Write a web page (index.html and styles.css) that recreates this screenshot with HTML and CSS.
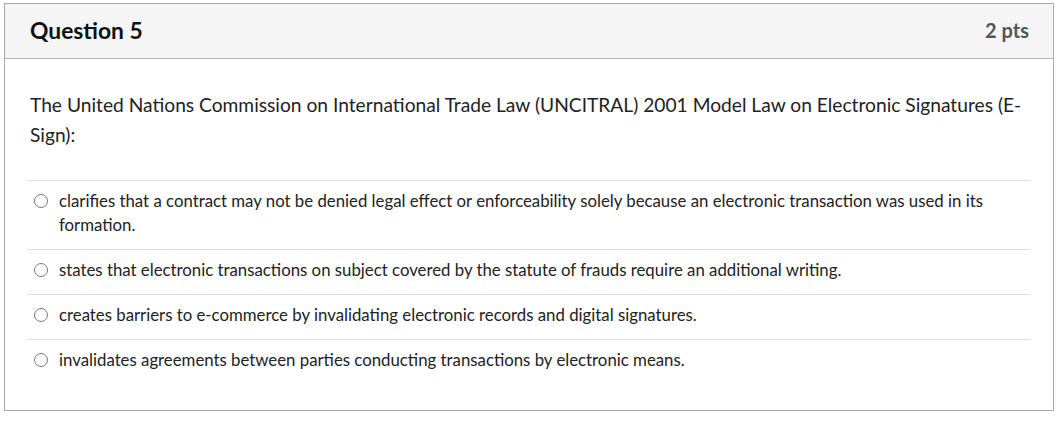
FILE: index.html
```html
<!DOCTYPE html>
<html>
<head>
<meta charset="utf-8">
<link rel="stylesheet" href="styles.css">
</head>
<body>
<div class="question">
  <div class="header">
    <h2 class="title">Question 5</h2>
    <div class="pts">2 pts</div>
  </div>
  <div class="content">
    <p class="text">The United Nations Commission on International Trade Law (UNCITRAL) 2001 Model Law on Electronic Signatures (E-Sign):</p>
    <div class="answers">
      <label class="answer"><span class="radio"></span><span class="atext">clarifies that a contract may not be denied legal effect or enforceability solely because an electronic transaction was used in its formation.</span></label>
      <label class="answer"><span class="radio"></span><span class="atext">states that electronic transactions on subject covered by the statute of frauds require an additional writing.</span></label>
      <label class="answer"><span class="radio"></span><span class="atext">creates barriers to e-commerce by invalidating electronic records and digital signatures.</span></label>
      <label class="answer"><span class="radio"></span><span class="atext">invalidates agreements between parties conducting transactions by electronic means.</span></label>
    </div>
  </div>
</div>
</body>
</html>
```
FILE: styles.css
```css
* { box-sizing: border-box; }
html, body { margin: 0; background: #fff; }
body {
  padding: 3px 5px 0 4px;
  font-family: Lato, "Open Sans", sans-serif;
  color: #222;
}
.question {
  border: 1px solid #a8a8a8;
  height: 408px;
  background: #fff;
}
.header {
  display: flex;
  justify-content: space-between;
  align-items: center;
  height: 55px;
  background: #f5f5f5;
  border-bottom: 1px solid #b5b5b5;
  padding: 0 24px 2px 25px;
}
.title {
  margin: 0;
  font-size: 22.8px;
  font-weight: 700;
  color: #111;
}
.pts {
  font-size: 20px;
  font-weight: 700;
  color: #555;
}
.content {
  padding: 31px 23px 0 25px;
}
.text {
  margin: 0;
  font-size: 19.2px;
  line-height: 30px;
  color: #222;
}
.answers {
  margin-top: 30px;
  margin-left: -3px;
  margin-right: 0;
}
.answer {
  display: flex;
  align-items: flex-start;
  border-top: 1px solid #dcdcdc;
  padding: 8px 0 12px 7px;
  font-size: 16.8px;
  line-height: 24px;
  color: #222;
}
.radio {
  flex: none;
  width: 14px;
  height: 14px;
  border: 1px solid #777;
  border-radius: 50%;
  margin-top: 5px;
  margin-right: 11px;
}
.atext { padding-right: 20px; }
```
